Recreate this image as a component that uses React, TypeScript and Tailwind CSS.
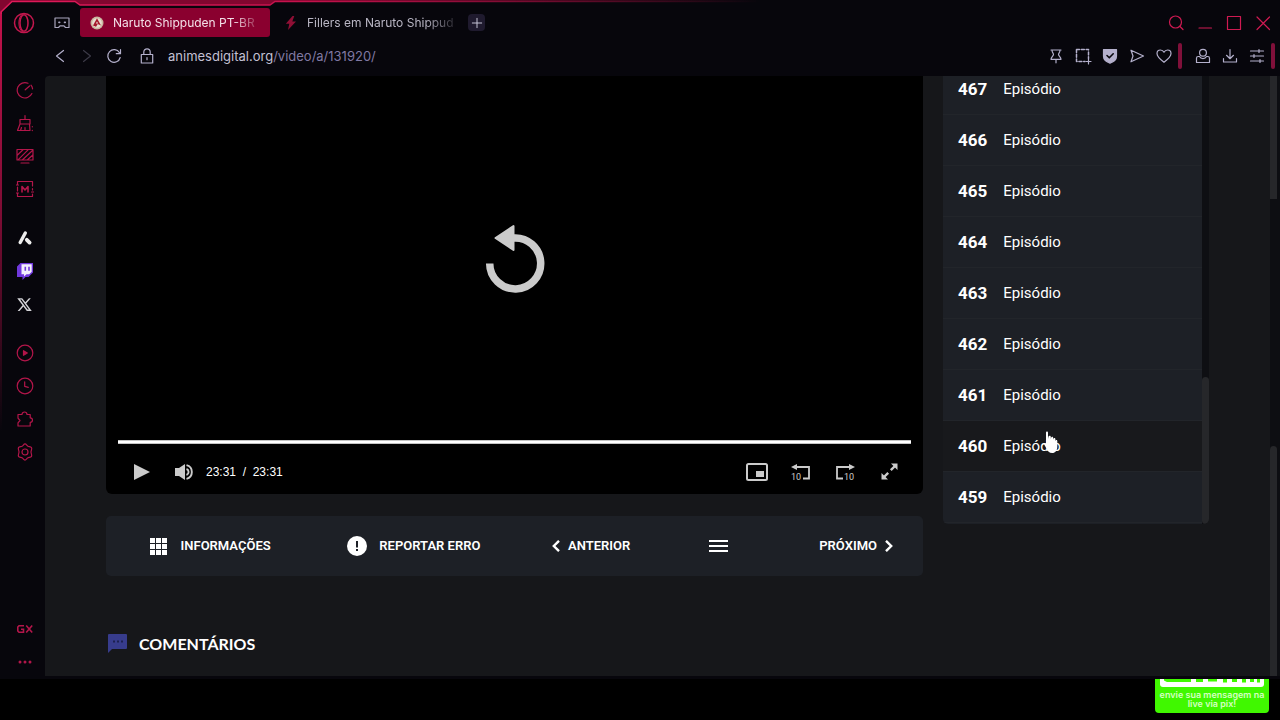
import type { ReactNode } from "react";
import { RiTwitterXLine } from "react-icons/ri";

type IconProps = { size?: number; children: ReactNode; width?: string };

// Shared frame for the thin outline icons of the browser chrome
function Outline({ size = 18, width = "1.2", children }: IconProps) {
  return (
    <svg
      width={size}
      height={size}
      viewBox="0 0 18 18"
      fill="none"
      stroke="currentColor"
      strokeWidth={width}
      strokeLinecap="round"
      strokeLinejoin="round"
      aria-hidden="true"
    >
      {children}
    </svg>
  );
}

const episodes = [467, 466, 465, 464, 463, 462, 461, 460, 459];
const hovered = 460;

const panels = [
  {
    label: "Speed Dial",
    icon: (
      <Outline>
        <path d="M12 2.2A7.7 7.7 0 1 0 15.9 12.5M15 4.2a7.6 7.6 0 0 1 1.6 3.6" />
        <path d="M9.2 8.8 13.6 5" />
      </Outline>
    ),
  },
  {
    label: "Limpeza",
    icon: (
      <Outline>
        <path d="M9 1.500v4M4 5.500h10v4.500H4zM4 10 1.500 16.500H14L13.500 10M5.500 13.500l-1 3M9 13.500v3M16.300 12.500v.3M16.300 16.300v.3" />
      </Outline>
    ),
  },
  {
    label: "Live wallpaper",
    icon: (
      <Outline>
        <path d="M1 2.5h16v10.5H1zM5 16h8M1.5 8 7 2.8M2 12.8 12 2.8M6.5 12.8 16.5 3.5M11.5 12.8 16.8 8" />
      </Outline>
    ),
  },
  {
    label: "GX Mods",
    icon: (
      <Outline>
        <path d="M16.5 6V1.500H1.500V5M1.500 7v4M1.500 13v3.500h15V14M16.500 8.500v1.500M.5 5h2M.5 13h2M15.500 12h2" />
        <path strokeWidth="1.6" d="M6 12V6.500l3 3.500 3-3.500V12" />
      </Outline>
    ),
  },
];

const apps = [
  {
    label: "Aria",
    icon: (
      <svg width="18" height="18" viewBox="0 0 18 18" fill="none" stroke="#eeeeee" strokeLinecap="round" aria-hidden="true">
        <path strokeWidth="3.4" d="M9.300 4 4.200 13.500" />
        <path strokeWidth="3.800" d="M10.800 10.800 13.600 13.600" />
      </svg>
    ),
  },
  {
    label: "Twitch",
    icon: (
      <svg width="18" height="18" viewBox="0 0 18 18" aria-hidden="true">
        <path fill="#7038dc" d="M4.500 1H17v9.500L12.500 15H9.500L6.500 18V15H1V4.500z" />
        <path fill="#f3effc" d="M5.500 2.300H15.700v7.500l-2.500 2.500h-2.700L8 14.600v-2.300H5.500z" />
        <path fill="#7038dc" d="M8.500 4.800h1.600v4H8.500zM12.200 4.800h1.600v4h-1.600z" />
      </svg>
    ),
  },
  { label: "X", icon: <RiTwitterXLine size={17} color="#d4d4d8" aria-hidden="true" /> },
];

const tools = [
  {
    label: "Player",
    icon: (
      <Outline>
        <circle cx="9" cy="9" r="7.800" />
        <path fill="currentColor" d="M7.500 6.700 11.300 9l-3.800 2.300z" />
      </Outline>
    ),
  },
  {
    label: "Histórico",
    icon: (
      <Outline>
        <circle cx="9" cy="9" r="7.800" />
        <path d="M8.700 4.800v4.600l3.600 1" />
      </Outline>
    ),
  },
  {
    label: "Extensões",
    icon: (
      <Outline>
        <path d="M2 4.500h4a2.500 2.500 0 0 1 5 0h3.200v3.300a2.300 2.300 0 0 1 0 4.600V16H2v-3.200l2-2.300-2-2.300z" />
      </Outline>
    ),
  },
  {
    label: "Configurações",
    icon: (
      <Outline>
        <path d="M9 .9c1.300 0 1.800 1.700 2.900 2.300s2.800.2 3.600 1.400-.5 2.900-.5 4.400 1.200 3.200.5 4.400-2.400.8-3.600 1.400S10.300 17.100 9 17.100s-1.800-1.700-2.900-2.300-2.900-.2-3.600-1.400.5-2.900.5-4.400-1.200-3.200-.5-4.400 2.400-.8 3.600-1.400S7.700.9 9 .9z" />
        <circle cx="9" cy="9" r="3" />
      </Outline>
    ),
  },
];

const pageActions = [
  { label: "Fixar", icon: <path d="M4 3h10M5 3c0 3 1.500 3 1.500 4.500S4 10 4 12.300h10C14 10 11.500 9 11.500 7.500S13 6 13 3M9 12.300v3.500" /> },
  {
    label: "Captura",
    icon: (
      <>
        <path strokeDasharray="3 1.800" strokeWidth="1.500" d="M2.500 2.500h12v9M2.500 2.500v12H11" />
        <path d="M14.500 12v5M12 14.500h5" />
      </>
    ),
  },
  {
    label: "Proteção",
    icon: (
      <>
        <path fill="currentColor" d="M2.500 2.500h13v6.800c0 3.500-3 5.700-6.500 6.900-3.500-1.200-6.500-3.400-6.500-6.900z" />
        <path stroke="#08070d" strokeWidth="1.600" d="m6 8.500 2.300 2.300L12.200 6.800" />
      </>
    ),
  },
  { label: "Enviar", icon: <path d="M3 3.200 15.500 9 3 14.800 5 9z" /> },
  {
    label: "Favoritos",
    icon: (
      <path d="M9 15.300C5 12.300 2 9.800 2 6.600 2 4.500 3.500 3 5.400 3 7 3 8.300 3.900 9 5.200 9.700 3.900 11 3 12.600 3 14.500 3 16 4.500 16 6.600c0 3.200-3 5.700-7 8.700z" />
    ),
  },
];

const userActions = [
  {
    label: "Perfil",
    icon: (
      <>
        <circle cx="9" cy="5.800" r="3.400" />
        <path d="M5.500 9.500H4.200A1.700 1.700 0 0 0 2.500 11.200V15.500h13v-4.300a1.700 1.700 0 0 0-1.700-1.700h-1.300c-1.300 2.700-5.700 2.700-7 0z" />
      </>
    ),
  },
  { label: "Downloads", icon: <path d="M9 2.500v9M5.500 8.300 9 11.700l3.500-3.400M2.500 11.500v3.500h13v-3.500" /> },
  { label: "Menu", icon: <path d="M2.500 4h13M2.500 9h13M2.500 14h13M11 2.500v3M6 7.500v3M12 12.500v3" /> },
];

function SideButton({ label, children }: { label: string; children: ReactNode }) {
  return (
    <button type="button" aria-label={label} className="flex h-7 w-7 items-center justify-center text-[#b3164a]">
      {children}
    </button>
  );
}

// Crimson edge that wraps the top-left corner and dips over the active tab
function FrameEdge() {
  return (
    <div className="pointer-events-none absolute inset-0 overflow-hidden">
      <div className="absolute left-0 top-3 h-[420px] w-0.5 bg-linear-to-b from-[#c4124c] via-[#7a0c33] to-transparent" />
      <svg className="absolute left-0 top-0" width="760" height="14" viewBox="0 0 760 14" aria-hidden="true">
        <defs>
          <linearGradient id="edge" gradientUnits="userSpaceOnUse" x1="0" y1="0" x2="760" y2="0">
            <stop offset="0" stopColor="#e01a5a" />
            <stop offset="0.4" stopColor="#c4124c" />
            <stop offset="1" stopColor="#c4124c" stopOpacity="0" />
          </linearGradient>
          <linearGradient id="band" gradientUnits="userSpaceOnUse" x1="0" y1="0" x2="760" y2="0">
            <stop offset="0" stopColor="#82062f" />
            <stop offset="0.4" stopColor="#82062f" />
            <stop offset="1" stopColor="#82062f" stopOpacity="0" />
          </linearGradient>
        </defs>
        <path fill="url(#band)" d="M0 0H760V1.500H275L270 5H80L75 1.500H12L1 12V14H0z" />
        <path fill="none" stroke="url(#edge)" strokeWidth="1.500" d="M1 14v-2L12 1.500H75L80 5H270L275 1.500H760" />
      </svg>
    </div>
  );
}

function TabStrip() {
  return (
    <div className="flex h-[37px] items-center pt-2">
      <button type="button" aria-label="Opera GX" className="flex w-12 justify-center text-[#c4174e]">
        <svg width="22" height="22" viewBox="0 0 22 22" fill="none" stroke="currentColor" aria-hidden="true">
          <circle cx="11" cy="11" r="9.500" strokeWidth="1.500" />
          <ellipse cx="11" cy="11" rx="4" ry="8.300" strokeWidth="1.500" />
          <path strokeWidth="1" d="M10 1.800C4.500 4 4.500 18 10 20.200" />
        </svg>
      </button>
      <button type="button" aria-label="GX Corner" className="mr-1 flex w-7 justify-center text-[#a9a5bd]">
        <Outline>
          <path d="M2 4h14v9.500H12.500L11 11.800H7L5.500 13.500H2z" />
          <path strokeWidth="1.800" d="M6 8.300h.6M11.600 8.300h.6" />
        </Outline>
      </button>

      <div role="tablist" className="flex gap-1 text-xs leading-4">
        <button
          type="button"
          role="tab"
          aria-selected="true"
          className="flex h-[29px] w-[190px] items-center gap-[9px] rounded-[3px] bg-[#8a002f] pl-2.5 pr-1 text-[#f3dfe8]"
        >
          <svg className="shrink-0" width="14" height="14" viewBox="0 0 14 14" aria-hidden="true">
            <circle cx="7" cy="7" r="6.500" fill="#c9b79f" />
            <circle cx="7" cy="7" r="4.800" fill="#e8ddd0" />
            <path fill="#a5182b" d="M7 2.300 11 9.500 7.800 8 6 10.800 3 9.500z" />
            <path fill="#e8ddd0" d="M7 5.500 8.200 7.600H5.800z" />
          </svg>
          <span className="whitespace-nowrap mask-r-from-85% mask-r-to-105%">Naruto Shippuden PT-BR</span>
        </button>
        <button
          type="button"
          role="tab"
          aria-selected="false"
          className="flex h-[29px] w-[190px] items-center gap-[9px] pl-2.5 pr-1 text-[#b9b6c4]"
        >
          <svg className="shrink-0" width="14" height="14" viewBox="0 0 14 14" aria-hidden="true">
            <path fill="#8f0f35" d="M8.500 0 1.800 7.800h3.500L4 14l8-8.500H8.300L10.300 0z" />
          </svg>
          <span className="whitespace-nowrap mask-r-from-80% mask-r-to-105%">Fillers em Naruto Shippud</span>
        </button>
        <button
          type="button"
          aria-label="Nova guia"
          className="flex h-[17px] w-[17px] items-center justify-center self-center rounded-sm bg-[#1f1a2e] text-[#d0cde0]"
        >
          <Outline size={14}>
            <path d="M9 3v12M3 9h12" />
          </Outline>
        </button>
      </div>

      <div className="ml-auto flex pr-[3px] text-[#cf1a52]">
        <button type="button" aria-label="Pesquisar guias" className="flex w-[29px] justify-center">
          <Outline>
            <circle cx="8.500" cy="8" r="6" />
            <path d="m13 12.500 3 3" />
          </Outline>
        </button>
        <button type="button" aria-label="Minimizar" className="flex w-[29px] justify-center">
          <Outline>
            <path d="M3 14h12.500" />
          </Outline>
        </button>
        <button type="button" aria-label="Maximizar" className="flex w-[29px] justify-center">
          <Outline>
            <path d="M2.500 2.500h13v13h-13z" />
          </Outline>
        </button>
        <button type="button" aria-label="Fechar" className="flex w-[29px] justify-center">
          <Outline>
            <path d="m3 3 12.500 12.500M15.500 3 3 15.500" />
          </Outline>
        </button>
      </div>
    </div>
  );
}

function AddressBar() {
  return (
    <div className="flex h-[39px] items-center pb-px pl-[46px] pr-[5px] text-[#b4b0cc]">
      <button type="button" aria-label="Voltar" className="flex w-[27px] justify-center">
        <Outline>
          <path d="M12.500 3.500 5.500 9l7 5.500" />
        </Outline>
      </button>
      <button type="button" aria-label="Avançar" disabled className="flex w-[27px] justify-center text-[#3c3a47]">
        <Outline>
          <path d="M5.500 3.500 12.500 9l-7 5.500" />
        </Outline>
      </button>
      <button type="button" aria-label="Recarregar" className="flex w-[27px] justify-center">
        <Outline>
          <path d="M15.200 10.500A6.300 6.300 0 1 1 14.500 5.700M15.500 2.500v4.200h-4.200" />
        </Outline>
      </button>
      <button type="button" aria-label="Site seguro" className="ml-1.5 flex w-[27px] justify-center">
        <Outline>
          <path d="M3.300 7.500h11.400V16H3.300zM5.800 7.500V5a3.200 3.200 0 0 1 6.400 0v2.500M9 10.700v2" />
        </Outline>
      </button>
      <button type="button" className="ml-2 flex-1 text-left text-[13px] leading-4 text-[#8079a3]">
        <span className="text-[#c3c0d3]">animesdigital.org</span>/video/a/131920/
      </button>
      <div className="mr-px flex">
        {pageActions.map((action) => (
          <button key={action.label} type="button" aria-label={action.label} className="flex w-[27px] justify-center">
            <Outline>{action.icon}</Outline>
          </button>
        ))}
      </div>
      <div className="mr-[7px] h-[26px] w-1 rounded-full bg-[#80103a]" />
      <div className="mr-px flex">
        {userActions.map((action) => (
          <button key={action.label} type="button" aria-label={action.label} className="flex w-[27px] justify-center">
            <Outline>{action.icon}</Outline>
          </button>
        ))}
      </div>
      <div className="h-[26px] w-1 rounded-full bg-[#80103a]" />
    </div>
  );
}

function Sidebar() {
  return (
    <nav className="flex w-[45px] shrink-0 flex-col items-center gap-[21px] pl-1">
      {[panels, apps, tools].map((group, i) => (
        <div key={i} className="flex flex-col gap-[5px]">
          {group.map((item) => (
            <SideButton key={item.label} label={item.label}>
              {item.icon}
            </SideButton>
          ))}
        </div>
      ))}
      <div className="mt-auto flex flex-col gap-[5px]">
        <SideButton label="GX">
          <svg width="18" height="12" viewBox="0 0 18 12" fill="none" stroke="currentColor" strokeWidth="1.600" aria-hidden="true">
            <path d="M8 2.800H3L1.800 4v4L3 9.200h4.500V6.200H5" />
            <path d="m10.200 2.500 6 7M16.200 2.500l-6 7" />
          </svg>
        </SideButton>
        <SideButton label="Mais">
          <svg width="16" height="4" viewBox="0 0 16 4" fill="currentColor" aria-hidden="true">
            <circle cx="3" cy="2" r="1.500" />
            <circle cx="8" cy="2" r="1.500" />
            <circle cx="13" cy="2" r="1.500" />
          </svg>
        </SideButton>
      </div>
    </nav>
  );
}

function Player() {
  return (
    <section aria-label="Player" className="flex h-[418px] flex-col rounded-b-md bg-black">
      <div className="flex flex-1 items-center justify-center pt-0.5">
        <button type="button" aria-label="Assistir novamente" className="text-[#cbcbcb]">
          <svg width="60" height="70" viewBox="0 0 60 70" aria-hidden="true">
            <path fill="none" stroke="currentColor" strokeWidth="7.500" d="M4.700 39.500A25.500 25.500 0 1 0 28 14" />
            <path
              fill="currentColor"
              stroke="currentColor"
              strokeWidth="2"
              strokeLinejoin="round"
              d="M10.500 14 28.500 2V26z"
            />
          </svg>
        </button>
      </div>
      <input
        type="range"
        aria-label="Posição do vídeo"
        min={0}
        max={1411}
        defaultValue={1411}
        className="mx-3 h-1 appearance-none border-y border-[#c4c4c4] bg-white [&::-webkit-slider-thumb]:appearance-none"
      />
      <div className="mt-1.5 flex h-11 items-center pl-[13px] pr-3 text-[#cbcbcb]">
        <button type="button" aria-label="Reproduzir" className="flex w-[46px] justify-center">
          <svg width="16" height="16" viewBox="0 0 16 16" fill="currentColor" aria-hidden="true">
            <path d="M0 0 16 8 0 16z" />
          </svg>
        </button>
        <button type="button" aria-label="Volume" className="flex w-10 justify-center">
          <svg width="20" height="16" viewBox="0 0 20 16" aria-hidden="true">
            <path fill="currentColor" d="M0 4h4l6-4v16l-6-4H0z" />
            <path fill="none" stroke="currentColor" strokeWidth="1.900" d="M11.500 1.200a7 7 0 0 1 0 13.600M11.500 5a3.200 3.200 0 0 1 0 6" />
          </svg>
        </button>
        <div className="ml-px whitespace-pre font-['Liberation_Sans',sans-serif] text-xs leading-4 text-white">
          23:31  /  23:31
        </div>
        <div className="ml-auto flex">
          <button type="button" aria-label="Picture-in-picture" className="flex w-11 justify-center">
            <svg width="22" height="18" viewBox="0 0 22 18" aria-hidden="true">
              <rect x="1" y="1" width="20" height="16" rx="1.500" fill="none" stroke="currentColor" strokeWidth="2" />
              <path fill="currentColor" d="M10 8h8v6h-8z" />
            </svg>
          </button>
          <button type="button" aria-label="Voltar 10 segundos" className="flex w-11 justify-center">
            <svg width="20" height="18" viewBox="0 0 20 18" aria-hidden="true">
              <path fill="none" stroke="currentColor" strokeWidth="1.800" d="M5 4h13v11.500h-6" />
              <path fill="currentColor" d="M0 4 6 1v6z" />
              <text x="0" y="16.500" fontSize="9" fill="currentColor">10</text>
            </svg>
          </button>
          <button type="button" aria-label="Avançar 10 segundos" className="flex w-11 justify-center">
            <svg width="20" height="18" viewBox="0 0 20 18" aria-hidden="true">
              <path fill="none" stroke="currentColor" strokeWidth="1.800" d="M15 4H2v11.500h6" />
              <path fill="currentColor" d="M20 4 14 1v6z" />
              <text x="9" y="16.500" fontSize="9" fill="currentColor">10</text>
            </svg>
          </button>
          <button type="button" aria-label="Tela cheia" className="flex w-11 justify-center">
            <svg width="17" height="17" viewBox="0 0 17 17" aria-hidden="true">
              <path stroke="currentColor" strokeWidth="2.400" d="M9.800 7.200 14 3M7.200 9.800 3 14" />
              <path fill="currentColor" d="M16.500.5v6.500L10 .5zM.5 16.500V10L7 16.500z" />
            </svg>
          </button>
        </div>
      </div>
    </section>
  );
}

function ActionBar() {
  return (
    <nav className="mt-[22px] grid h-[60px] grid-cols-[4fr_4fr_3fr_2fr_3fr] items-center rounded-[5px] bg-[#1d2026] text-[13px] font-semibold leading-4 text-white">
      <a href="#info" className="flex items-center justify-center gap-3.5 pl-1">
        <svg width="17" height="17" viewBox="0 0 17 17" fill="currentColor" aria-hidden="true">
          <path d="M0 0h5v5H0zM6 0h5v5H6zM12 0h5v5h-5zM0 6h5v5H0zM6 6h5v5H6zM12 6h5v5h-5zM0 12h5v5H0zM6 12h5v5H6zM12 12h5v5h-5z" />
        </svg>
        INFORMAÇÕES
      </a>
      <a href="#erro" className="flex items-center justify-center gap-3 pl-[3px]">
        <svg width="20" height="20" viewBox="0 0 20 20" aria-hidden="true">
          <circle cx="10" cy="10" r="10" fill="currentColor" />
          <path fill="#1d2026" d="M9 5h2v6.500H9zM9 13h2v2H9z" />
        </svg>
        REPORTAR ERRO
      </a>
      <a href="#anterior" className="flex items-center justify-center gap-2">
        <svg width="8" height="12" viewBox="0 0 8 12" fill="none" stroke="currentColor" strokeWidth="2.400" aria-hidden="true">
          <path d="M7 .8 1.800 6 7 11.200" />
        </svg>
        ANTERIOR
      </a>
      <a href="#lista" aria-label="Lista de episódios" className="flex justify-center">
        <svg width="19" height="12" viewBox="0 0 19 12" fill="currentColor" aria-hidden="true">
          <path d="M0 0h19v2H0zM0 5h19v2H0zM0 10h19v2H0z" />
        </svg>
      </a>
      <a href="#proximo" className="flex items-center justify-end gap-2 pr-[30px]">
        PRÓXIMO
        <svg width="8" height="12" viewBox="0 0 8 12" fill="none" stroke="currentColor" strokeWidth="2.400" aria-hidden="true">
          <path d="M1 .8 6.200 6 1 11.200" />
        </svg>
      </a>
    </nav>
  );
}

function EpisodeList() {
  return (
    <aside className="relative flex h-[448px] w-[266px] shrink-0 overflow-hidden rounded-b-[5px] bg-[#1d2026]">
      <ul className="flex flex-1 flex-col justify-end pb-px">
        {episodes.map((number) => (
          <li key={number} className="shrink-0">
            <a
              href={`#episodio-${number}`}
              className={
                "flex h-[51px] items-center gap-4 border-b border-[#22252a] px-[15px] text-[15px] leading-5 text-white " +
                (number === hovered ? "bg-[#18191c]" : "")
              }
            >
              <strong className="text-[17px] font-bold">{number}</strong>
              Episódio
            </a>
          </li>
        ))}
      </ul>
      <div className="flex w-[7px] flex-col bg-[#0e0f13]">
        <div className="mt-auto h-[147px] rounded-sm bg-[#26272a]" />
      </div>

      {/* Pointer over the hovered episode */}
      <svg className="absolute left-[101px] top-[355px]" width="14" height="23" viewBox="0 0 14 23" aria-hidden="true">
        <path
          fill="#ffffff"
          d="M2 1.500C2 0 4 0 4 1.500V8L4.500 5.500C5 4.300 6.800 4.500 6.800 6V8l.4-1.500c.5-1 2-.8 2 .5v1.500l.4-1c.6-.8 1.800-.4 1.800.8V10l.4-.8c.6-.6 1.500-.2 1.500.8V15.500c0 4-2 6.500-5 6.500-3.200 0-4.600-2-5.800-4.500L.3 13.800c-.6-1.500.7-2.300 1.700-1z"
        />
      </svg>
    </aside>
  );
}

function Page() {
  return (
    <main className="flex flex-1 overflow-hidden rounded-tl-sm bg-[#16171a] font-['Roboto',sans-serif]">
      <div className="flex-1 px-[61px]">
        <div className="flex items-start gap-5">
          <div className="min-w-0 flex-1">
            <Player />
            <ActionBar />
            <h2 className="mt-[58px] flex items-center gap-3 font-['Lato',sans-serif] text-base font-bold leading-5 text-white">
              <svg width="21" height="20" viewBox="0 0 21 20" aria-hidden="true">
                <path fill="#373c8c" d="M3 0h17a1 1 0 0 1 1 1v13a1 1 0 0 1-1 1H6l-4 4V1a1 1 0 0 1 1-1z" />
                <path fill="#1d2050" d="M7 6.500h2v2H7zM11 6.500h2v2h-2zM15 6.500h2v2h-2z" />
              </svg>
              COMENTÁRIOS
            </h2>
          </div>
          <EpisodeList />
        </div>
      </div>
      <div className="flex w-2.5 flex-col bg-[#0d0e12] pr-[3px]">
        <div className="h-[123px] bg-[#26272a]" />
        <div className="mt-auto h-[230px] rounded-t-sm bg-[#26272a]" />
      </div>
    </main>
  );
}

export default function App() {
  return (
    <div className="flex min-h-screen flex-col bg-black font-['Inter',sans-serif]">
      <div className="relative flex flex-1 flex-col bg-[#07060c] pb-[3px]">
        <header>
          <TabStrip />
          <AddressBar />
        </header>
        <div className="flex flex-1">
          <Sidebar />
          <Page />
        </div>
        <FrameEdge />
      </div>

      <footer className="flex h-[41px] items-start justify-end pr-[11px]">
        <div className="flex h-[34px] w-[114px] flex-col items-center rounded-b bg-[#40f800] text-center text-[9px] font-semibold leading-[9px] text-[#d4ffc2]">
          <svg width="104" height="9" viewBox="0 0 104 9" aria-hidden="true">
            <path fill="#ffffff" d="M0 0h104v5a3 3 0 0 1-3 3H3a3 3 0 0 1-3-3z" />
            <path fill="#40f800" d="M4 0h27v3H7L4 1.500zM36 0h7v3h-7zM48 0h9v2.500h-9zM63 0h4v3.500h-4zM72 0h5v3h-5zM82 0h4v3.500h-4zM90 0h4v3h-4zM97 0h3v3.500h-3z" />
          </svg>
          <p className="mt-0.5 whitespace-nowrap">
            envie sua mensagem na
            <br />
            live via pix!
          </p>
        </div>
      </footer>
    </div>
  );
}
